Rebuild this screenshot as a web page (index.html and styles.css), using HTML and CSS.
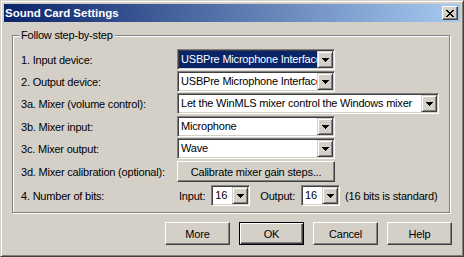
FILE: index.html
```html
<!DOCTYPE html>
<html lang="en">
<head>
    <meta charset="UTF-8">
    <title>Sound Card Settings</title>
    <link rel="stylesheet" href="styles.css">
</head>
<body>
    <div class="window">
        <div class="titlebar">
            <span class="title">Sound Card Settings</span>
            <button class="close-button">
                <svg width="8" height="7" viewBox="0 0 8 7" shape-rendering="crispEdges">
                    <path d="M0 0h2v1h-2z M6 0h2v1h-2z M1 1h2v1h-2z M5 1h2v1h-2z M2 2h4v1h-4z M3 3h2v1h-2z M2 4h4v1h-4z M1 5h2v1h-2z M5 5h2v1h-2z M0 6h2v1h-2z M6 6h2v1h-2z" fill="#000"/>
                </svg>
            </button>
        </div>

        <fieldset class="group">
            <legend>Follow step-by-step</legend>

            <div class="row">
                <span class="label">1. Input device:</span>
                <div class="combo selected">
                    <span class="value">USBPre Microphone Interface</span>
                    <span class="drop"><svg width="7" height="4" viewBox="0 0 7 4" shape-rendering="crispEdges"><path d="M0 0h7v1h-7z M1 1h5v1h-5z M2 2h3v1h-3z M3 3h1v1h-1z"/></svg></span>
                </div>
            </div>
            <div class="row">
                <span class="label">2. Output device:</span>
                <div class="combo">
                    <span class="value">USBPre Microphone Interface</span>
                    <span class="drop"><svg width="7" height="4" viewBox="0 0 7 4" shape-rendering="crispEdges"><path d="M0 0h7v1h-7z M1 1h5v1h-5z M2 2h3v1h-3z M3 3h1v1h-1z"/></svg></span>
                </div>
            </div>
            <div class="row">
                <span class="label">3a. Mixer (volume control):</span>
                <div class="combo wide">
                    <span class="value">Let the WinMLS mixer control the Windows mixer</span>
                    <span class="drop"><svg width="7" height="4" viewBox="0 0 7 4" shape-rendering="crispEdges"><path d="M0 0h7v1h-7z M1 1h5v1h-5z M2 2h3v1h-3z M3 3h1v1h-1z"/></svg></span>
                </div>
            </div>
            <div class="row spaced">
                <span class="label">3b. Mixer input:</span>
                <div class="combo">
                    <span class="value">Microphone</span>
                    <span class="drop"><svg width="7" height="4" viewBox="0 0 7 4" shape-rendering="crispEdges"><path d="M0 0h7v1h-7z M1 1h5v1h-5z M2 2h3v1h-3z M3 3h1v1h-1z"/></svg></span>
                </div>
            </div>
            <div class="row">
                <span class="label">3c. Mixer output:</span>
                <div class="combo">
                    <span class="value">Wave</span>
                    <span class="drop"><svg width="7" height="4" viewBox="0 0 7 4" shape-rendering="crispEdges"><path d="M0 0h7v1h-7z M1 1h5v1h-5z M2 2h3v1h-3z M3 3h1v1h-1z"/></svg></span>
                </div>
            </div>
            <div class="row spaced">
                <span class="label">3d. Mixer calibration (optional):</span>
                <button class="btn calibrate">Calibrate mixer gain steps...</button>
            </div>
            <div class="row bits">
                <span class="label">4. Number of bits:</span>
                <span class="field-label">Input:</span>
                <div class="combo small">
                    <span class="value">16</span>
                    <span class="drop"><svg width="7" height="4" viewBox="0 0 7 4" shape-rendering="crispEdges"><path d="M0 0h7v1h-7z M1 1h5v1h-5z M2 2h3v1h-3z M3 3h1v1h-1z"/></svg></span>
                </div>
                <span class="field-label output">Output:</span>
                <div class="combo small">
                    <span class="value">16</span>
                    <span class="drop"><svg width="7" height="4" viewBox="0 0 7 4" shape-rendering="crispEdges"><path d="M0 0h7v1h-7z M1 1h5v1h-5z M2 2h3v1h-3z M3 3h1v1h-1z"/></svg></span>
                </div>
                <span class="note">(16 bits is standard)</span>
            </div>
        </fieldset>

        <div class="actions">
            <button class="btn">More</button>
            <button class="btn default">OK</button>
            <button class="btn">Cancel</button>
            <button class="btn">Help</button>
        </div>
    </div>
</body>
</html>
```

FILE: styles.css
```css
* {
    box-sizing: border-box;
}
body {
    margin: 0;
    font-family: "Liberation Sans", Arial, sans-serif;
    font-size: 11px;
    letter-spacing: -0.2px;
    color: #000;
}
.window {
    width: 464px;
    height: 257px;
    background-color: #d4d0c8;
    border: 1px solid;
    border-color: #d4d0c8 #404040 #404040 #d4d0c8;
    box-shadow: inset 1px 1px #fff, inset -1px -1px #808080;
    padding: 3px;
}
.titlebar {
    height: 18px;
    display: flex;
    align-items: center;
    justify-content: space-between;
    background: linear-gradient(to right, #0a246a, #a6caf0);
    padding: 0 2px 0 1px;
}
.title {
    color: #fff;
    font-weight: bold;
    font-size: 11.5px;
    letter-spacing: 0;
}
.close-button {
    width: 16px;
    height: 14px;
    padding: 0;
    background-color: #d4d0c8;
    border: 1px solid;
    border-color: #fff #404040 #404040 #fff;
    box-shadow: inset -1px -1px #808080;
    display: flex;
    align-items: center;
    justify-content: center;
}
.group {
    width: 438px;
    margin: 7px 0 0 8px;
    padding: 7px 0 6px 8px;
    border: 1px solid #808080;
    box-shadow: 1px 1px #fff, inset 1px 1px #fff;
}
.group legend {
    margin-left: -2px;
    padding: 0 2px;
    line-height: 13px;
    background-color: #d4d0c8;
}
.row {
    display: flex;
    align-items: center;
    height: 21px;
    margin-top: 1px;
}
.row:first-of-type {
    margin-top: 0;
}
.row.spaced {
    margin-top: 2px;
}
.row.bits {
    margin-top: 3px;
}
.label {
    width: 156px;
    flex-shrink: 0;
    white-space: nowrap;
}
.combo {
    width: 158px;
    height: 21px;
    display: flex;
    background-color: #fff;
    border: 1px solid;
    border-color: #808080 #fff #fff #808080;
    box-shadow: inset 1px 1px #404040, inset -1px -1px #d4d0c8;
    padding: 1px;
}
.combo.wide {
    width: 262px;
}
.combo.small {
    width: 39px;
    margin-left: 6px;
}
.combo .value {
    flex: 1;
    padding-left: 2px;
    line-height: 17px;
    white-space: nowrap;
    overflow: hidden;
}
.combo.selected .value {
    background-color: #0a246a;
    color: #fff;
}
.drop {
    width: 16px;
    height: 17px;
    flex-shrink: 0;
    background-color: #d4d0c8;
    border: 1px solid;
    border-color: #d4d0c8 #404040 #404040 #d4d0c8;
    box-shadow: inset 1px 1px #fff, inset -1px -1px #808080;
    display: flex;
    align-items: center;
    justify-content: center;
}
.field-label {
    margin-left: 2px;
}
.field-label.output {
    margin-left: 10px;
}
.note {
    margin-left: 5px;
    white-space: nowrap;
}
.btn {
    width: 65px;
    height: 23px;
    padding: 0;
    font: inherit;
    letter-spacing: inherit;
    color: #000;
    background-color: #d4d0c8;
    border: 1px solid;
    border-color: #fff #404040 #404040 #fff;
    box-shadow: inset -1px -1px #808080;
}
.btn.calibrate {
    width: 158px;
    height: 21px;
}
.btn.default {
    border-color: #000;
    box-shadow: inset 1px 1px #fff, inset -1px -1px #404040, inset -2px -2px #808080;
}
.actions {
    display: flex;
    justify-content: flex-end;
    gap: 9px;
    margin-top: 9px;
    padding-right: 8px;
}
```
